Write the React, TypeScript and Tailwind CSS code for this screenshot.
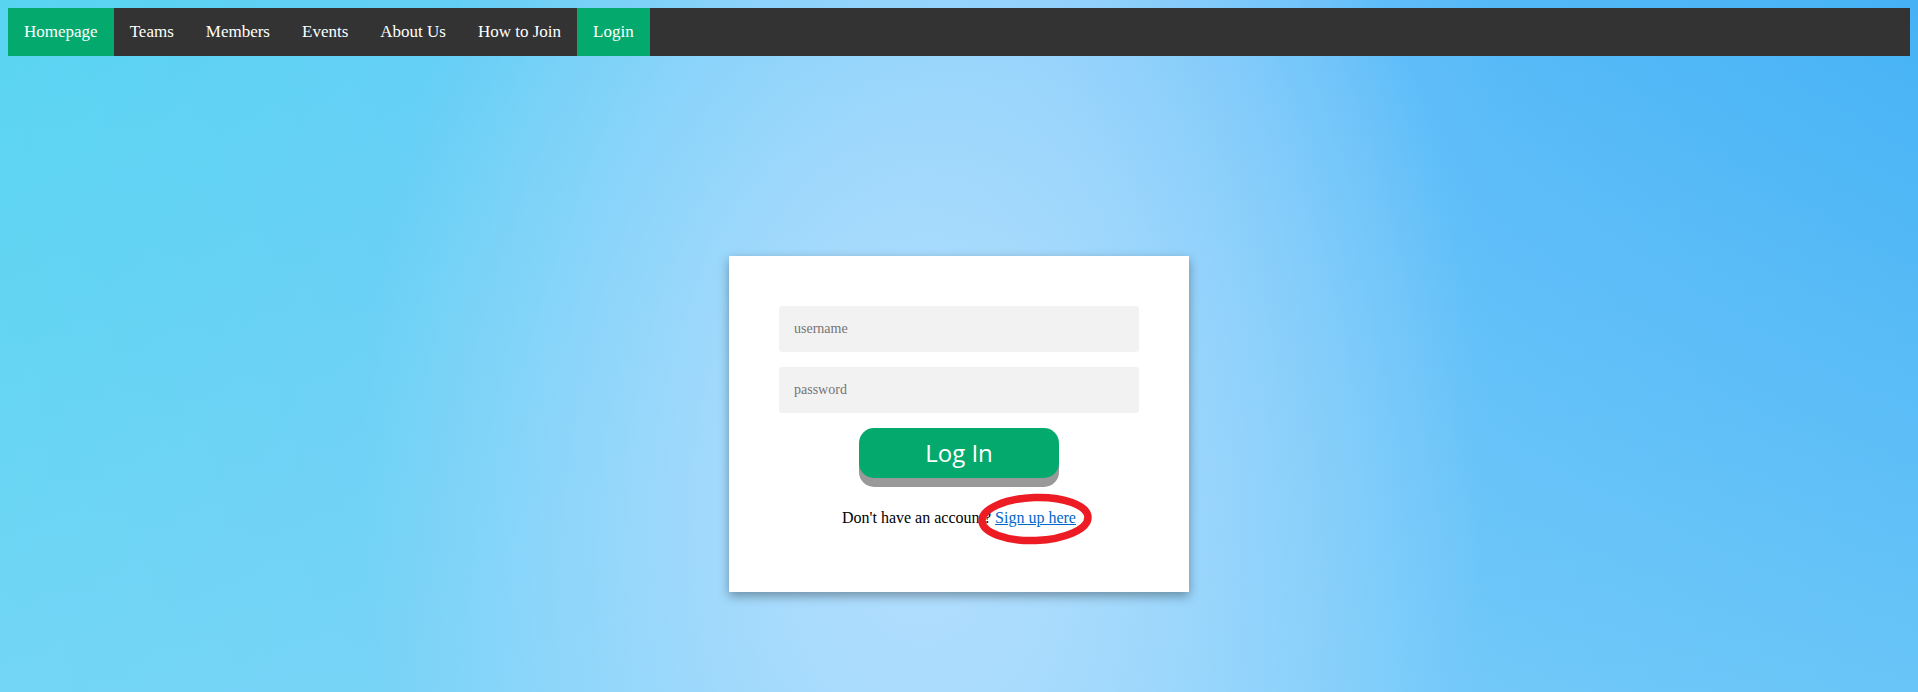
import React from "react";

const navItems = ["Homepage", "Teams", "Members", "Events", "About Us", "How to Join", "Login"];

export default function App() {
  return (
    <div
      className="min-h-[692px] w-full overflow-hidden pt-2 pl-2 pr-2 bg-[radial-gradient(ellipse_560px_900px_at_48%_72%,rgba(180,223,254,1)_0%,rgba(172,220,253,0.9)_28%,rgba(160,214,252,0)_100%),linear-gradient(to_bottom,rgba(140,215,250,0)_0%,rgba(140,215,250,0.5)_100%),linear-gradient(to_right,#58d4f1_0%,#66cdf6_30%,#7cc8fa_55%,#55b9f8_78%,#46b2f5_100%)]"
      style={{ fontFamily: '"Liberation Serif", "Times New Roman", serif' }}
    >
      <nav className="flex h-12 w-full bg-[#333333]">
        {navItems.map((item) => (
          <a
            key={item}
            className={`flex h-full items-center px-4 text-[17px] text-white ${
              item === "Homepage" || item === "Login" ? "bg-[#04aa6d]" : ""
            }`}
          >
            {item}
          </a>
        ))}
      </nav>

      <div className="relative mx-auto mt-[200px] flex w-[460px] flex-col items-center bg-white px-[50px] pt-[50px] pb-[65px] shadow-[0_4px_10px_rgba(0,0,0,0.35)]">
        <input
          placeholder="username"
          className="h-[46px] w-full rounded-[3px] bg-[#f2f2f2] pl-[15px] text-[14px] text-black outline-none placeholder:text-[#757575]"
        />
        <input
          type="password"
          placeholder="password"
          className="mt-[15px] h-[46px] w-full rounded-[3px] bg-[#f2f2f2] pl-[15px] text-[14px] text-black outline-none placeholder:text-[#757575]"
        />
        <button
          className="mt-[15px] flex h-[50px] w-[200px] items-center justify-center rounded-[15px] bg-[#04aa6d] text-[24px] text-white shadow-[0_9px_0_#999999]"
          style={{ fontFamily: '"Open Sans", "Noto Sans", sans-serif' }}
        >
          Log In
        </button>
        <p className="mt-[31px] text-[16px] leading-[18px] text-black">
          Don't have an account? <a className="text-[#0066cc] underline">Sign up here</a>
        </p>

        <svg
          className="pointer-events-none absolute left-[248px] top-[236px]"
          width="118"
          height="54"
          viewBox="0 0 118 54"
        >
          <ellipse
            cx="58"
            cy="27"
            rx="53"
            ry="21.5"
            fill="none"
            stroke="#ed1c24"
            strokeWidth="7.5"
            transform="rotate(-2 58 27)"
          />
        </svg>
      </div>
    </div>
  );
}
